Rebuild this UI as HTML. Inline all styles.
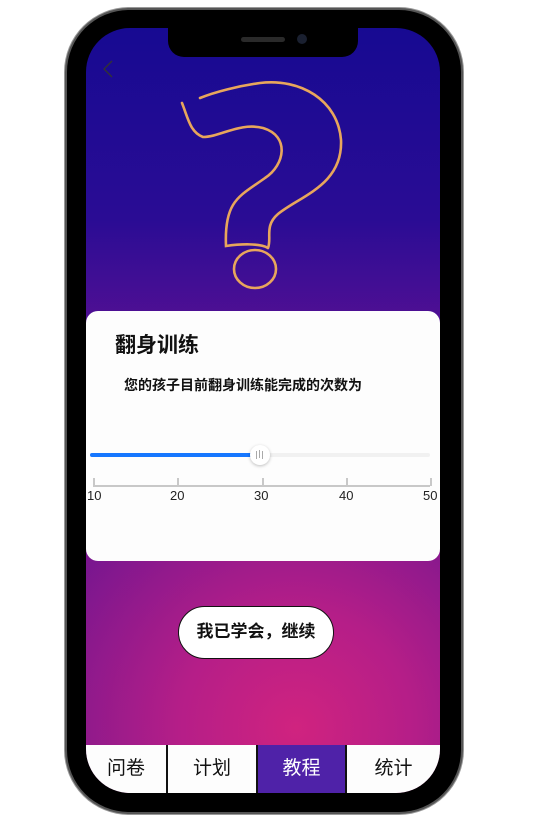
<!DOCTYPE html>
<html><head><meta charset="utf-8"><style>
html,body{margin:0;padding:0;width:536px;height:817px;background:#fff;overflow:hidden;font-family:"Liberation Sans","Noto Sans CJK SC",sans-serif}
.phone{position:absolute;left:67px;top:10px;width:394px;height:802px;border-radius:62px;background:#000;box-shadow:0 0 0 2px #555,0 0 0 3px #999}
.btnL{position:absolute;background:#444;width:4px;border-radius:2px}
.screen{position:absolute;left:86px;top:28px;width:354px;height:765px;border-radius:44px;overflow:hidden;
background:radial-gradient(ellipse 260px 260px at 210px 700px,#d0237f 0%,#b51e88 45%,rgba(120,25,140,0) 100%),linear-gradient(180deg,#170a92 0%,#2a0c94 25%,#5a1093 42%,#7a1690 60%,#7e188c 100%)}
.notch{position:absolute;left:168px;top:28px;width:190px;height:29px;background:#000;border-radius:0 0 16px 16px}
.card{position:absolute;left:0;top:283px;width:354px;height:250px;background:#fdfdfd;border-radius:12px}
.tabs{position:absolute;left:0;top:717px;width:354px;height:48px;display:flex}
.tab{height:48px;background:#fdfdfd;font-size:19px;line-height:48px;text-align:center;color:#111;border-right:2px solid #111;box-sizing:border-box}
</style></head><body>
<div class="btnL" style="left:64px;top:137px;height:30px"></div>
<div class="btnL" style="left:64px;top:193px;height:60px"></div>
<div class="btnL" style="left:64px;top:270px;height:60px"></div>
<div class="btnL" style="left:459px;top:215px;height:95px"></div>
<div class="phone"></div>
<div class="screen">
<svg style="position:absolute;left:-86px;top:-28px" width="536" height="817">
<path d="M112 61 L104 69 L112 77" fill="none" stroke="#333" stroke-width="1.3"/>
<path d="M182 103 C188 118 190 132 203 137 C220 137 240 122 263 128 C290 136 285 165 265 178 C240 196 224 200 226 246 C240 244 260 243 268 248 M268 248 C272 238 264 226 278 214 C300 196 343 185 341 140 C338 100 300 78 260 83 C238 86 215 92 200 98" fill="none" stroke="#e8a65c" stroke-width="2.6" stroke-linecap="round"/>
<ellipse cx="255" cy="269" rx="21" ry="19" fill="none" stroke="#e8a65c" stroke-width="2.6"/>
</svg>
<div class="card">
<div style="position:absolute;left:29px;top:18px;font-size:21px;font-weight:bold;color:#111">翻身训练</div>
<div style="position:absolute;left:38px;top:64px;font-size:14px;font-weight:bold;color:#111">您的孩子目前翻身训练能完成的次数为</div>
<div style="position:absolute;left:4px;top:142px;width:340px;height:4px;background:#f1f1f1;border-radius:2px"></div>
<div style="position:absolute;left:4px;top:142px;width:168px;height:4px;background:#1677ff;border-radius:2px"></div>
<div style="position:absolute;left:164px;top:134px;width:20px;height:20px;border-radius:50%;background:#fff;box-shadow:0 1px 3px rgba(0,0,0,.25)"></div>
<div style="position:absolute;left:170px;top:140px;width:1px;height:8px;background:#aaa;box-shadow:3px -1px 0 #aaa,6px 0 0 #aaa"></div>
<div style="position:absolute;left:7px;top:174px;width:337px;height:2px;background:#c8c8c8"></div>
<div style="position:absolute;left:7px;top:167px;width:2px;height:8px;background:#c8c8c8"></div>
<div style="position:absolute;left:91px;top:167px;width:2px;height:8px;background:#c8c8c8"></div>
<div style="position:absolute;left:176px;top:167px;width:2px;height:8px;background:#c8c8c8"></div>
<div style="position:absolute;left:260px;top:167px;width:2px;height:8px;background:#c8c8c8"></div>
<div style="position:absolute;left:344px;top:167px;width:2px;height:8px;background:#c8c8c8"></div>
<div style="position:absolute;top:177px;left:0;width:354px;font-size:13px;color:#222">
<span style="position:absolute;left:1px">10</span><span style="position:absolute;left:84px">20</span><span style="position:absolute;left:168px">30</span><span style="position:absolute;left:253px">40</span><span style="position:absolute;left:337px">50</span></div>
</div>
<div style="position:absolute;left:92px;top:578px;width:156px;height:53px;box-sizing:border-box;border:1.5px solid #111;border-radius:27px;background:#fff;font-size:17px;font-weight:bold;line-height:50px;text-align:center;color:#111">我已学会，继续</div>
<div class="tabs">
<div class="tab" style="width:82px">问卷</div>
<div class="tab" style="width:90px">计划</div>
<div class="tab" style="width:89px;background:#4f22a8;color:#fff">教程</div>
<div class="tab" style="width:93px;border:none">统计</div>
</div>
</div>
<div class="notch"></div>
<div style="position:absolute;left:241px;top:37px;width:44px;height:5px;border-radius:3px;background:#2a2a2a"></div>
<div style="position:absolute;left:297px;top:34px;width:10px;height:10px;border-radius:50%;background:#1a2030"></div>
</body></html>
